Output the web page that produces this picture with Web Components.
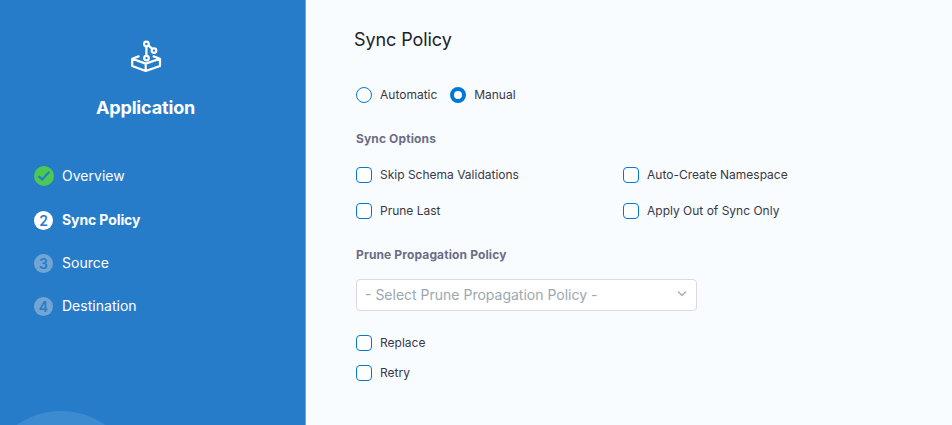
<!DOCTYPE html>
<html lang="en"><head><meta charset="utf-8"><title>Sync Policy</title>
<style>html,body{margin:0;height:100%}body{overflow:hidden;font-family:Inter,"Liberation Sans",sans-serif;background:#f9fcff}</style></head>
<body><app-wizard></app-wizard>
<script>
const define=(name,html,setup)=>customElements.define(name,class extends HTMLElement{
  constructor(){super();this.attachShadow({mode:'open'}).innerHTML=html;}
  connectedCallback(){if(setup)setup(this,this.shadowRoot);}
});

define('app-icon',`<style>:host{display:block;width:32px;height:36px}svg{display:block}</style>
<svg width="32" height="36" viewBox="0 0 32 36" fill="none" stroke="#fff" stroke-width="2.2" stroke-linejoin="round" stroke-linecap="round">
<path d="M8.6 18.4 2.2 20.8V28L15.7 33 30 28V20.8L23.6 18.4M2.2 20.8 15.7 25.6 30 20.8M15.7 25.6V33M16.4 8.8V17.2M18.6 7.6 21.8 10.4"/>
<circle cx="16.4" cy="6" r="2.3"/><circle cx="24" cy="12.6" r="2.3"/><circle cx="16.5" cy="20.1" r="2.3"/></svg>`);

define('wizard-step',`<style>
:host{display:flex;align-items:center;gap:9px;height:20px;color:#fff;font-size:14px;line-height:20px;letter-spacing:.02px;white-space:nowrap}
:host([state=active]){font-weight:700;letter-spacing:-.1px}
.badge{box-sizing:border-box;width:19px;height:19px;border-radius:50%;background:#73a5d4;color:#277cc9;display:flex;align-items:center;justify-content:center;font-size:14px;line-height:19px;font-weight:600}
:host([state=active]) .badge{background:#fff}
:host([state=done]) .badge{background:#4dc952;width:20px;height:20px}
:host([state=done]){gap:8px}
svg{display:block}
</style><span class="badge"></span><slot></slot>`,(h,r)=>{
 const b=r.querySelector('.badge');
 if(h.getAttribute('state')==='done')b.innerHTML='<svg width="20" height="20" viewBox="0 0 20 20" fill="none" stroke="#277cc9" stroke-width="2.2"><path d="M4.5 10.2 8.2 13.4 15.4 5.8"/></svg>';
 else b.textContent=h.getAttribute('number');
});

define('wizard-sidebar',`<style>
:host{display:flex;flex-direction:column;position:relative;overflow:hidden;box-sizing:border-box;width:306px;background:#277cc9;border-right:1px solid #91a1b5;padding-top:38px}
app-icon{margin-left:130px}
h1{margin:22px 0 0 96px;font-size:18px;line-height:24px;font-weight:700;color:#fff;letter-spacing:-.16px}
nav{display:flex;flex-direction:column;gap:23px;margin:46px 0 0 34px}
wizard-step[state=done]{margin-bottom:1px}
.orb{position:absolute;left:-17px;top:411px;width:156px;height:156px;border-radius:50%;background:#3c8ad0}
</style><div class="orb"></div><app-icon></app-icon><h1>Application</h1>
<nav><wizard-step state="done">Overview</wizard-step><wizard-step state="active" number="2">Sync Policy</wizard-step><wizard-step number="3">Source</wizard-step><wizard-step number="4">Destination</wizard-step></nav>`);

const choice=`:host{display:flex;align-items:center;gap:8px;height:16px;font-size:12px;line-height:16px;color:#383946;white-space:nowrap}i{box-sizing:border-box;width:16px;height:16px;background:#fff;border:1px solid #0278d5}`;
define('check-option',`<style>${choice}i{border-radius:4px}</style><i></i><slot></slot>`);
define('radio-option',`<style>${choice}i{border-radius:50%}:host([checked]) i{border-width:4px}</style><i></i><slot></slot>`);
define('field-label',`<style>:host{display:block;font-size:12px;line-height:16px;font-weight:700;letter-spacing:.13px;color:#6b6d85;white-space:nowrap}</style><slot></slot>`);
define('select-box',`<style>:host{box-sizing:border-box;display:flex;align-items:center;justify-content:space-between;width:341px;height:32px;border:1px solid #d9dae5;border-radius:4px;background:#fff;padding:0 9px 0 8px;font-size:14px;line-height:20px;color:#9ba8b1;white-space:nowrap}svg{display:block;margin-top:-2px}</style>
<slot></slot><svg width="10" height="8" viewBox="0 0 10 8" fill="none" stroke="#b0b1c4" stroke-width="1.6" stroke-linecap="round" stroke-linejoin="round"><path d="M1.5 2 5 5.5 8.5 2"/></svg>`);

define('sync-form',`<style>
:host{display:block;box-sizing:border-box;flex:1;padding:28px 0 0 50px}
h2{margin:0 0 0 -2px;font-size:18px;line-height:24px;font-weight:400;color:#22222a;letter-spacing:-.08px}
.radios{display:flex;gap:12.8px;margin:35px 0 28px}
.grid{display:grid;grid-template-columns:267px auto;row-gap:20px;margin:20px 0 28px}
select-box{margin:16px 0 24px}
.more{display:grid;gap:14px}
</style><h2>Sync Policy</h2>
<div class="radios"><radio-option>Automatic</radio-option><radio-option checked>Manual</radio-option></div>
<field-label>Sync Options</field-label>
<div class="grid"><check-option>Skip Schema Validations</check-option><check-option>Auto-Create Namespace</check-option><check-option>Prune Last</check-option><check-option>Apply Out of Sync Only</check-option></div>
<field-label>Prune Propagation Policy</field-label>
<select-box>- Select Prune Propagation Policy -</select-box>
<div class="more"><check-option>Replace</check-option><check-option>Retry</check-option></div>`);

define('app-wizard',`<style>:host{display:flex;height:100vh}</style><wizard-sidebar></wizard-sidebar><sync-form></sync-form>`);
</script></body></html>
